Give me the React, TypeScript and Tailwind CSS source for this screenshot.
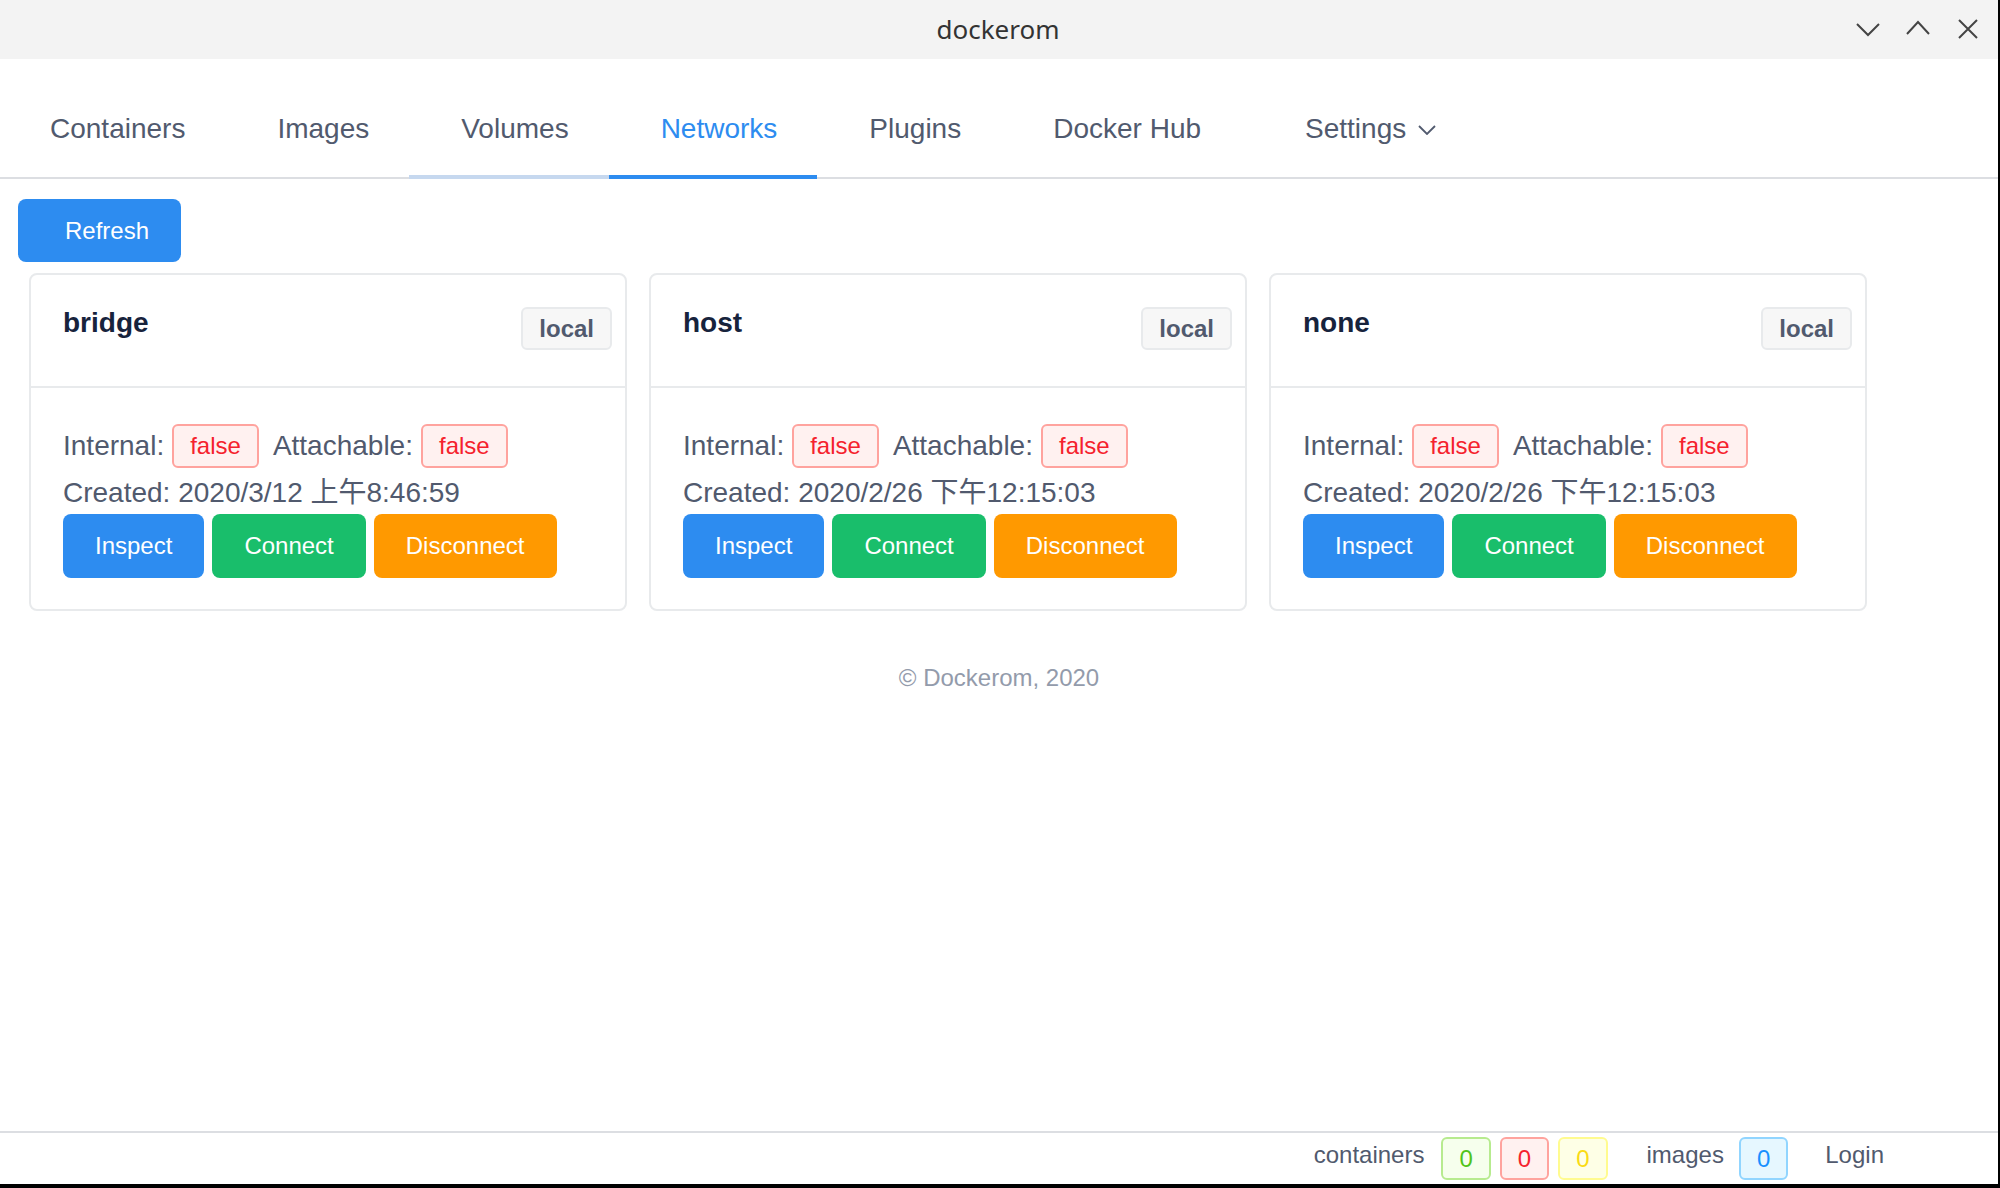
import React from 'react'

const tabs = [
  { label: 'Containers', first: true },
  { label: 'Images' },
  { label: 'Volumes', hover: true },
  { label: 'Networks', active: true },
  { label: 'Plugins' },
  { label: 'Docker Hub' },
]

const networks = [
  { name: 'bridge', created: '2020/3/12 上午8:46:59' },
  { name: 'host', created: '2020/2/26 下午12:15:03' },
  { name: 'none', created: '2020/2/26 下午12:15:03' },
]

function FalseTag() {
  return (
    <span className="h-[44px] px-[16px] flex items-center border-2 border-[#ffa39e] bg-[#fff1f0] rounded-[6px] text-[24px] text-[#f5222d]">
      false
    </span>
  )
}

function NetworkCard({ name, created }: { name: string; created: string }) {
  return (
    <div className="w-[598px] border-2 border-[#e8eaec] rounded-[8px] bg-white">
      {/* Header */}
      <div className="h-[113px] border-b-2 border-[#e8eaec] flex justify-between items-start">
        <div className="pt-[28px] pl-[32px] leading-[40px] text-[28px] font-bold text-[#17233c]">{name}</div>
        <span className="mt-[32px] mr-[13px] h-[43px] px-[16px] flex items-center border-2 border-[#e8eaec] bg-[#f7f7f7] rounded-[6px] text-[24px] font-bold text-[#515a6e]">
          local
        </span>
      </div>

      {/* Body */}
      <div className="pt-[32px] pb-[31px] px-[32px] text-[28px] text-[#515a6e]">
        <div className="h-[52px] flex items-center">
          <span>Internal:</span>
          <span className="ml-[8px]">
            <FalseTag />
          </span>
          <span className="ml-[14px]">Attachable:</span>
          <span className="ml-[8px]">
            <FalseTag />
          </span>
        </div>
        <div className="h-[42px] flex items-center">Created: {created}</div>
        <div className="flex gap-[8px]">
          <button className="h-[64px] px-[32px] rounded-[8px] bg-[#2d8cf0] text-white text-[24px]">Inspect</button>
          <button className="h-[64px] px-[32px] rounded-[8px] bg-[#19be6b] text-white text-[24px]">Connect</button>
          <button className="h-[64px] px-[32px] rounded-[8px] bg-[#ff9900] text-white text-[24px]">Disconnect</button>
        </div>
      </div>
    </div>
  )
}

function CountTag({ value, className }: { value: number; className: string }) {
  return (
    <span className={`h-[43px] px-[16px] flex items-center border-2 rounded-[6px] text-[24px] ${className}`}>{value}</span>
  )
}

export default function App() {
  return (
    <div className="w-[2000px] h-[1188px] bg-black overflow-hidden font-['Liberation_Sans','Noto_Sans_CJK_SC',sans-serif]">
      <div className="w-[1998px] h-[1184px] bg-white flex flex-col">
        {/* Title bar */}
        <div className="h-[59px] shrink-0 bg-[#f3f3f3] grid grid-cols-[1fr_auto_1fr] items-center">
          <div />
          <div className="pr-[2px] font-['Noto_Sans',sans-serif] text-[26px] text-[#333]">dockerom</div>
          <div className="flex justify-end items-center gap-[26px] pr-[18px] text-[#444]">
            <svg width="24" height="24" viewBox="0 0 24 24" fill="none" stroke="currentColor" strokeWidth="2">
              <path d="M1 6 L12 17 L23 6" />
            </svg>
            <svg width="24" height="24" viewBox="0 0 24 24" fill="none" stroke="currentColor" strokeWidth="2">
              <path d="M1 16 L12 4 L23 16" />
            </svg>
            <svg width="24" height="24" viewBox="0 0 24 24" fill="none" stroke="currentColor" strokeWidth="2">
              <path d="M3 2 L21 20 M21 2 L3 20" />
            </svg>
          </div>
        </div>

        {/* Menu */}
        <div className="h-[120px] shrink-0 border-b-2 border-[#dcdee2] flex">
          {tabs.map((t) => (
            <div
              key={t.label}
              className={`h-[120px] pt-[54px] pr-[40px] leading-[32px] text-[28px] border-b-4 ${
                t.first ? 'pl-[50px]' : 'pl-[52px]'
              } ${
                t.active
                  ? 'border-[#2d8cf0] text-[#2d8cf0]'
                  : t.hover
                  ? 'border-[#c6d8ef] text-[#515a6e]'
                  : 'border-transparent text-[#515a6e]'
              }`}
            >
              {t.label}
            </div>
          ))}
          <div className="h-[120px] pt-[54px] pl-[64px] pr-[40px] leading-[32px] text-[28px] text-[#515a6e] flex items-start">
            <span>Settings</span>
            <svg className="ml-[12px] mt-[12px]" width="18" height="10" viewBox="0 0 18 10" fill="none" stroke="currentColor" strokeWidth="1.8">
              <path d="M1 1 L9 9 L17 1" />
            </svg>
          </div>
        </div>

        {/* Content */}
        <div className="flex-1 pt-[20px] pl-[18px]">
          <button className="w-[163px] h-[63px] pl-[47px] text-left rounded-[8px] bg-[#2d8cf0] text-white text-[24px]">Refresh</button>
          <div className="mt-[11px] pl-[11px] flex gap-[22px]">
            {networks.map((n) => (
              <NetworkCard key={n.name} name={n.name} created={n.created} />
            ))}
          </div>
          <div className="mt-[51px] pr-[18px] leading-[32px] text-center text-[24px] text-[#939bab]">© Dockerom, 2020</div>
        </div>

        {/* Status bar */}
        <div className="h-[53px] shrink-0 border-t-2 border-[#dcdee2] flex items-center justify-end pr-[114px] text-[24px] text-[#515a6e]">
          <span className="pb-[8px]">containers</span>
          <span className="ml-[17px]">
            <CountTag value={0} className="border-[#b7eb8f] bg-[#f6ffed] text-[#52c41a]" />
          </span>
          <span className="ml-[9px]">
            <CountTag value={0} className="border-[#ffa39e] bg-[#fff1f0] text-[#f5222d]" />
          </span>
          <span className="ml-[9px]">
            <CountTag value={0} className="border-[#fffb8f] bg-[#feffe6] text-[#fadb14]" />
          </span>
          <span className="ml-[39px] pb-[8px]">images</span>
          <span className="ml-[15px]">
            <CountTag value={0} className="border-[#91d5ff] bg-[#e6f7ff] text-[#1890ff]" />
          </span>
          <span className="ml-[37px] pb-[8px]">Login</span>
        </div>
      </div>
    </div>
  )
}
